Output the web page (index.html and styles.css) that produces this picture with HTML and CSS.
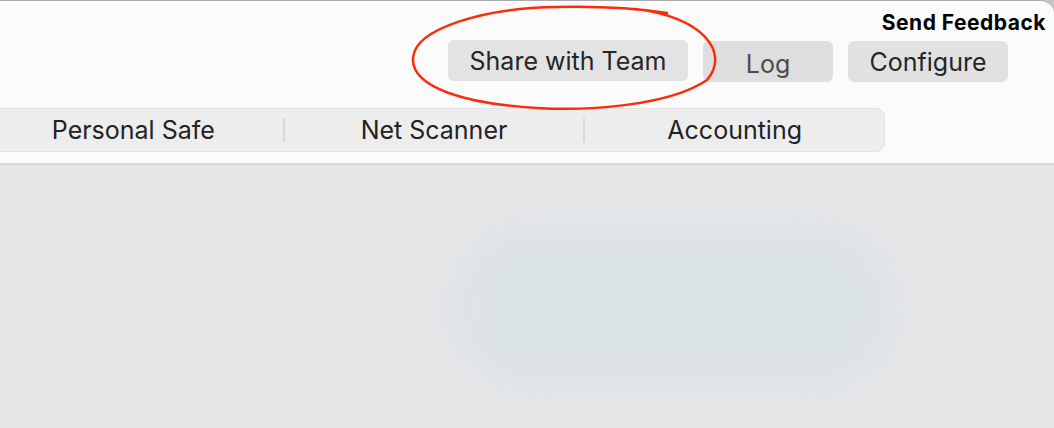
FILE: index.html
```html
<!DOCTYPE html>
<html lang="en">
<head>
    <meta charset="UTF-8" />
    <title>Toolbar</title>
    <link rel="stylesheet" href="styles.css">
</head>
<body>
    <div class="window">
        <header class="toolbar">
            <div class="feedback-row">
                <a class="feedback" href="#">Send Feedback</a>
            </div>
            <div class="actions">
                <button class="btn btn-share">Share with Team</button>
                <button class="btn btn-log">Log</button>
                <button class="btn btn-config">Configure</button>
            </div>
            <nav class="tabs">
                <span class="tab">Personal Safe</span>
                <span class="tab">Net Scanner</span>
                <span class="tab">Accounting</span>
            </nav>
        </header>
        <main class="content">
            <div class="blob"></div>
        </main>

        <!-- hand drawn red circle round the share button -->
        <svg class="annotation" width="330" height="116" viewBox="0 0 330 116">
            <path d="M230 9 C 296 16, 326 52, 302 80 C 264 106, 182 111, 132 108 C 62 104, 6 88, 8 58 C 10 28, 80 8, 152 7 C 200 6, 236 9, 262 13"
                  fill="none" stroke="#fb2c0a" stroke-width="2.5" stroke-linecap="round" />
        </svg>
    </div>
</body>
</html>
```

FILE: styles.css
```css
* {
    box-sizing: border-box;
    margin: 0;
    padding: 0;
}

body {
    font-family: 'Inter', 'Roboto', sans-serif;
    background: #c4c4c6;
    width: 1054px;
    height: 428px;
    overflow: hidden;
}

.window {
    position: relative;
    height: 428px;
    background: #e5e6e8;
    border-top: 1px solid #a9a9ab;
    border-top-right-radius: 14px;
    overflow: hidden;
}

.toolbar {
    height: 164px;
    background: #fbfbfb;
    border-bottom: 2px solid #d9d9db;
    display: flex;
    flex-direction: column;
}

.feedback-row {
    display: flex;
    justify-content: flex-end;
    padding: 9px 8px 0 0;
    height: 39px;
}

.feedback {
    font-size: 21px;
    font-weight: 700;
    color: #000;
    text-decoration: none;
    letter-spacing: 0.5px;
}

.actions {
    display: flex;
    justify-content: flex-end;
    gap: 15px;
    padding-right: 46px;
    height: 42px;
}

.btn {
    font-family: inherit;
    border: none;
    border-radius: 6px;
    background: #e1e1e1;
    color: #262626;
    font-size: 25px;
    height: 41px;
}

.btn-share {
    width: 240px;
    background: #e3e3e3;
}

.btn-log {
    width: 130px;
    margin-top: 1px;
    padding-top: 5px;
    color: #4c4c4c;
    background: #dedede;
}

.btn-config {
    width: 160px;
    margin-top: 1px;
}

.tabs {
    display: flex;
    margin-top: 26px;
    margin-left: -17px;
    width: 902px;
    height: 44px;
    background: #ededee;
    border: 1px solid #e2e2e4;
    border-radius: 9px;
    align-items: center;
}

.tab {
    flex: 1;
    text-align: center;
    font-size: 25px;
    color: #232323;
    border-left: 2px solid #d8d8d8;
    line-height: 24px;
}

.tab:first-child {
    border-left: none;
}

.content {
    height: 263px;
    display: flex;
    justify-content: flex-end;
    padding: 62px 160px 0 0;
}

.blob {
    width: 440px;
    height: 160px;
    border-radius: 80px;
    background: #dce3e6;
    filter: blur(14px);
}

.annotation {
    position: absolute;
    left: 405px;
    top: -1px;
}
```
